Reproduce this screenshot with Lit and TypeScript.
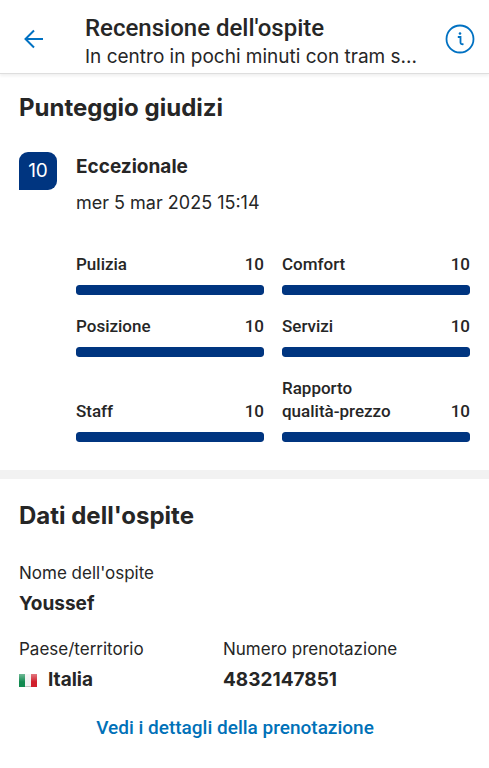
import { LitElement, html, css } from "lit";
import { customElement, property } from "lit/decorators.js";

interface Score {
  label: string;
  value: number;
}

const SCORES: Score[] = [
  { label: "Pulizia", value: 10 },
  { label: "Comfort", value: 10 },
  { label: "Posizione", value: 10 },
  { label: "Servizi", value: 10 },
  { label: "Staff", value: 10 },
  { label: "Rapporto qualità-prezzo", value: 10 },
];

@customElement("score-bar")
class ScoreBar extends LitElement {
  @property() label = "";
  @property({ type: Number }) value = 0;

  static styles = css`
    :host {
      display: flex;
      flex-direction: column;
      justify-content: flex-end;
      gap: 9px;
      font: 500 17px/23px Roboto, sans-serif;
    }
    .line {
      display: flex;
      justify-content: space-between;
      align-items: flex-end;
      gap: 48px;
    }
    .track {
      height: 10px;
      border-radius: 3px;
      background: #e7e7e7;
      overflow: hidden;
    }
    .fill {
      height: 100%;
      border-radius: 3px;
      background: #003580;
    }
  `;

  render() {
    return html`
      <div class="line"><span>${this.label}</span><span>${this.value}</span></div>
      <div
        class="track"
        role="meter"
        aria-label=${this.label}
        aria-valuemin="0"
        aria-valuemax="10"
        aria-valuenow=${this.value}
      >
        <div class="fill" style="width:${this.value * 10}%"></div>
      </div>
    `;
  }
}

@customElement("app-root")
class AppRoot extends LitElement {
  static styles = css`
    :host {
      display: block;
      min-height: 100vh;
      background: #fff;
      color: #262626;
      font: 400 17px/24px Inter, "Open Sans", sans-serif;
    }
    h1, h2, h3, p, dl, dt, dd {
      margin: 0;
    }
    .header {
      display: flex;
      align-items: center;
      padding: 12px 14px 3px;
      border-bottom: 1px solid #dedede;
      box-shadow: 0 2px 3px #f0f0f0;
    }
    .icon {
      display: flex;
      flex: none;
      padding: 0;
      border: 0;
      margin-bottom: 4px;
      background: none;
      color: #0071c2;
      cursor: pointer;
    }
    .back {
      padding: 0 4px;
    }
    .titles {
      flex: 1;
      min-width: 0;
      margin: 0 24px 0 31px;
    }
    .title {
      font: 500 24px/32px Roboto, sans-serif;
    }
    .property {
      font-size: 19px;
      line-height: 26px;
      white-space: nowrap;
    }
    .section {
      padding: 18px 19px 28px;
    }
    .heading {
      font-size: 24px;
      line-height: 32px;
      font-weight: 700;
    }
    .review {
      display: flex;
      gap: 19px;
      margin-top: 28px;
    }
    .badge {
      display: flex;
      flex: none;
      align-items: center;
      justify-content: center;
      width: 38px;
      height: 38px;
      border-radius: 9px 9px 9px 0;
      background: #003580;
      color: #fff;
      font-size: 19px;
    }
    .body {
      flex: 1;
      min-width: 0;
    }
    .rating {
      font-size: 19px;
      line-height: 30px;
      font-weight: 700;
    }
    .date {
      margin-top: 9px;
      font-size: 18px;
    }
    .scores {
      display: grid;
      grid-template-columns: 1fr 1fr;
      gap: 20px 18px;
      margin-top: 38px;
    }
    .guest {
      border-top: 9px solid #f2f2f2;
      padding: 21px 19px 20px;
    }
    .facts {
      display: grid;
      grid-template-columns: 185px 1fr;
      gap: 17px 19px;
      margin-top: 28px;
    }
    .wide {
      grid-column: 1 / -1;
    }
    .term {
      line-height: 26px;
      font-size: 17px;
    }
    .value {
      display: flex;
      align-items: center;
      gap: 11px;
      padding-top: 3px;
      font-size: 19px;
      line-height: 30px;
      font-weight: 700;
    }
    .link {
      display: block;
      margin-top: 19px;
      padding-right: 19px;
      color: #0071b8;
      font: 500 19px/28px Roboto, sans-serif;
      text-align: center;
      text-decoration: none;
    }
  `;

  render() {
    return html`
      <header class="header">
        <button class="icon back" aria-label="Indietro">
          <svg width="32" height="32" viewBox="0 0 32 32" fill="none" stroke="currentColor" stroke-width="2">
            <path d="M25 16H7.500M16 7.500L7.500 16L16 24.500" />
          </svg>
        </button>
        <div class="titles">
          <h1 class="title">Recensione dell'ospite</h1>
          <p class="property">In centro in pochi minuti con tram s...</p>
        </div>
        <button class="icon" aria-label="Informazioni">
          <svg width="30" height="30" viewBox="0 0 30 30" fill="none" stroke="currentColor" stroke-width="1.800">
            <circle cx="15" cy="15" r="13.500" />
            <path d="M12.800 13H15.500V18.500Q15.500 20.500 18.500 20.200" />
            <circle cx="15" cy="9.500" r="1.300" fill="currentColor" stroke="none" />
          </svg>
        </button>
      </header>
      <main>
        <section class="section">
          <h2 class="heading">Punteggio giudizi</h2>
          <div class="review">
            <div class="badge">10</div>
            <div class="body">
              <h3 class="rating">Eccezionale</h3>
              <p class="date">mer 5 mar 2025 15:14</p>
              <div class="scores">
                ${SCORES.map((s) => html`<score-bar .label=${s.label} .value=${s.value}></score-bar>`)}
              </div>
            </div>
          </div>
        </section>
        <section class="guest">
          <h2 class="heading">Dati dell'ospite</h2>
          <dl class="facts">
            <div class="wide">
              <dt class="term">Nome dell'ospite</dt>
              <dd class="value">Youssef</dd>
            </div>
            <div>
              <dt class="term">Paese/territorio</dt>
              <dd class="value">
                <svg width="18" height="13" viewBox="0 0 18 13" aria-hidden="true">
                  <defs>
                    <linearGradient id="shine" x1="0" y1="0" x2="0" y2="1">
                      <stop offset="0" stop-color="#fff" stop-opacity="0.400" />
                      <stop offset="0.600" stop-color="#fff" stop-opacity="0" />
                    </linearGradient>
                  </defs>
                  <rect width="18" height="13" fill="#f1f1f1" />
                  <rect width="6" height="13" fill="#128a50" />
                  <rect x="12" width="6" height="13" fill="#d01f2c" />
                  <rect width="18" height="13" fill="url(#shine)" />
                  <path d="M6 12.500H12" stroke="#c4c4c4" />
                </svg>
                Italia
              </dd>
            </div>
            <div>
              <dt class="term">Numero prenotazione</dt>
              <dd class="value">4832147851</dd>
            </div>
          </dl>
          <a class="link" href="#prenotazione">Vedi i dettagli della prenotazione</a>
        </section>
      </main>
    `;
  }
}
